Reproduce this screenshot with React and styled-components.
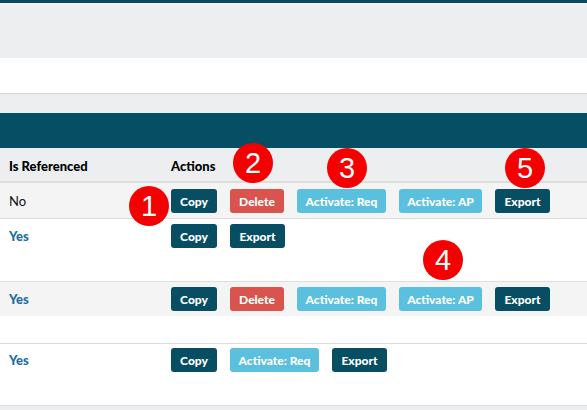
import React from "react";
import styled, { createGlobalStyle } from "styled-components";

const Global = createGlobalStyle`
  html, body { margin: 0; padding: 0; background: #ffffff; }
  body { font-family: "Lato", "Noto Sans", sans-serif; color: #111; }
`;

const Page = styled.div`
  position: relative;
  width: 587px;
  height: 410px;
  overflow: hidden;
  background: #eceeef;
`;

const TopBar = styled.div`
  height: 3px;
  background: #0a4b5f;
`;

const Band = styled.div`
  height: ${(p) => p.$h}px;
  background: ${(p) => p.$bg};
  border-top: ${(p) => (p.$topLine ? "2px solid #f3f4f5" : "none")};
  border-bottom: ${(p) => (p.$line ? "1px solid #d4d6d8" : "none")};
  box-sizing: border-box;
`;

const PanelHeader = styled.div`
  height: 35px;
  background: #064e63;
`;

const Table = styled.div`
  background: #fff;
`;

const Row = styled.div`
  display: grid;
  grid-template-columns: 162px 1fr;
  align-items: start;
  height: ${(p) => p.$h}px;
  box-sizing: border-box;
  padding: ${(p) => p.$pt}px 0 0 9px;
  background: ${(p) => p.$bg || "#fff"};
  border-bottom: ${(p) => (p.$line ? `${p.$line}px solid #dcdddd` : "none")};
`;

const HeadCell = styled.div`
  font-size: 13px;
  font-weight: 900;
  color: #000;
  line-height: 24px;
`;

const Cell = styled.div`
  font-size: 13px;
  line-height: 24px;
  font-weight: ${(p) => (p.$link ? 900 : 400)};
  color: ${(p) => (p.$link ? "#1c6ea4" : "#111")};
`;

const Actions = styled.div`
  display: flex;
  gap: 13px;
`;

const colors = {
  dark: "#074e62",
  red: "#d9534f",
  info: "#5bc0de",
};

const Btn = styled.button`
  flex: none;
  height: 24px;
  width: ${(p) => p.$w}px;
  padding: 0;
  border: none;
  border-radius: 3px;
  background: ${(p) => colors[p.$kind]};
  color: #fff;
  font-family: "Lato", "Noto Sans", sans-serif;
  font-weight: 900;
  font-size: 12px;
  cursor: pointer;
`;

const Filler = styled.div`
  height: ${(p) => p.$h}px;
  background: #fff;
  border-bottom: ${(p) => (p.$line ? "1px solid #dcdddd" : "none")};
`;

const Marker = styled.div`
  position: absolute;
  left: ${(p) => p.$x - 20}px;
  top: ${(p) => p.$y - 20}px;
  width: 40px;
  height: 40px;
  border-radius: 50%;
  background: #f40000;
  color: #fff;
  font-family: "Liberation Sans", Arial, sans-serif;
  font-size: 29px;
  line-height: 40px;
  text-align: center;
`;

const B = ({ kind, w, children }) => (
  <Btn $kind={kind} $w={w}>
    {children}
  </Btn>
);

export default function App() {
  return (
    <Page>
      <Global />
      <TopBar />
      <Band $h={55} $bg="#eceeef" $topLine />
      <Band $h={36} $bg="#ffffff" $line />
      <Band $h={19} $bg="#eceeef" />
      <PanelHeader />
      <Table>
        <Row $h={35} $pt={6} $bg="#eceeef" $line={2}>
          <HeadCell>Is Referenced</HeadCell>
          <HeadCell>Actions</HeadCell>
        </Row>
        <Row $h={36} $pt={6} $bg="#f4f4f4" $line={1}>
          <Cell>No</Cell>
          <Actions>
            <B kind="dark" w={46}>Copy</B>
            <B kind="red" w={54}>Delete</B>
            <B kind="info" w={89}>Activate: Req</B>
            <B kind="info" w={83}>Activate: AP</B>
            <B kind="dark" w={55}>Export</B>
          </Actions>
        </Row>
        <Row $h={63} $pt={5} $line={1}>
          <Cell $link>Yes</Cell>
          <Actions>
            <B kind="dark" w={46}>Copy</B>
            <B kind="dark" w={55}>Export</B>
          </Actions>
        </Row>
        <Row $h={34} $pt={5} $bg="#f4f4f4">
          <Cell $link>Yes</Cell>
          <Actions>
            <B kind="dark" w={46}>Copy</B>
            <B kind="red" w={54}>Delete</B>
            <B kind="info" w={89}>Activate: Req</B>
            <B kind="info" w={83}>Activate: AP</B>
            <B kind="dark" w={55}>Export</B>
          </Actions>
        </Row>
        <Filler $h={27} $line />
        <Row $h={62} $pt={4} $line={1}>
          <Cell $link>Yes</Cell>
          <Actions>
            <B kind="dark" w={46}>Copy</B>
            <B kind="info" w={89}>Activate: Req</B>
            <B kind="dark" w={55}>Export</B>
          </Actions>
        </Row>
      </Table>
      <Marker $x={149} $y={206}>1</Marker>
      <Marker $x={253} $y={163}>2</Marker>
      <Marker $x={347} $y={168}>3</Marker>
      <Marker $x={443} $y={260}>4</Marker>
      <Marker $x={525} $y={168}>5</Marker>
    </Page>
  );
}
